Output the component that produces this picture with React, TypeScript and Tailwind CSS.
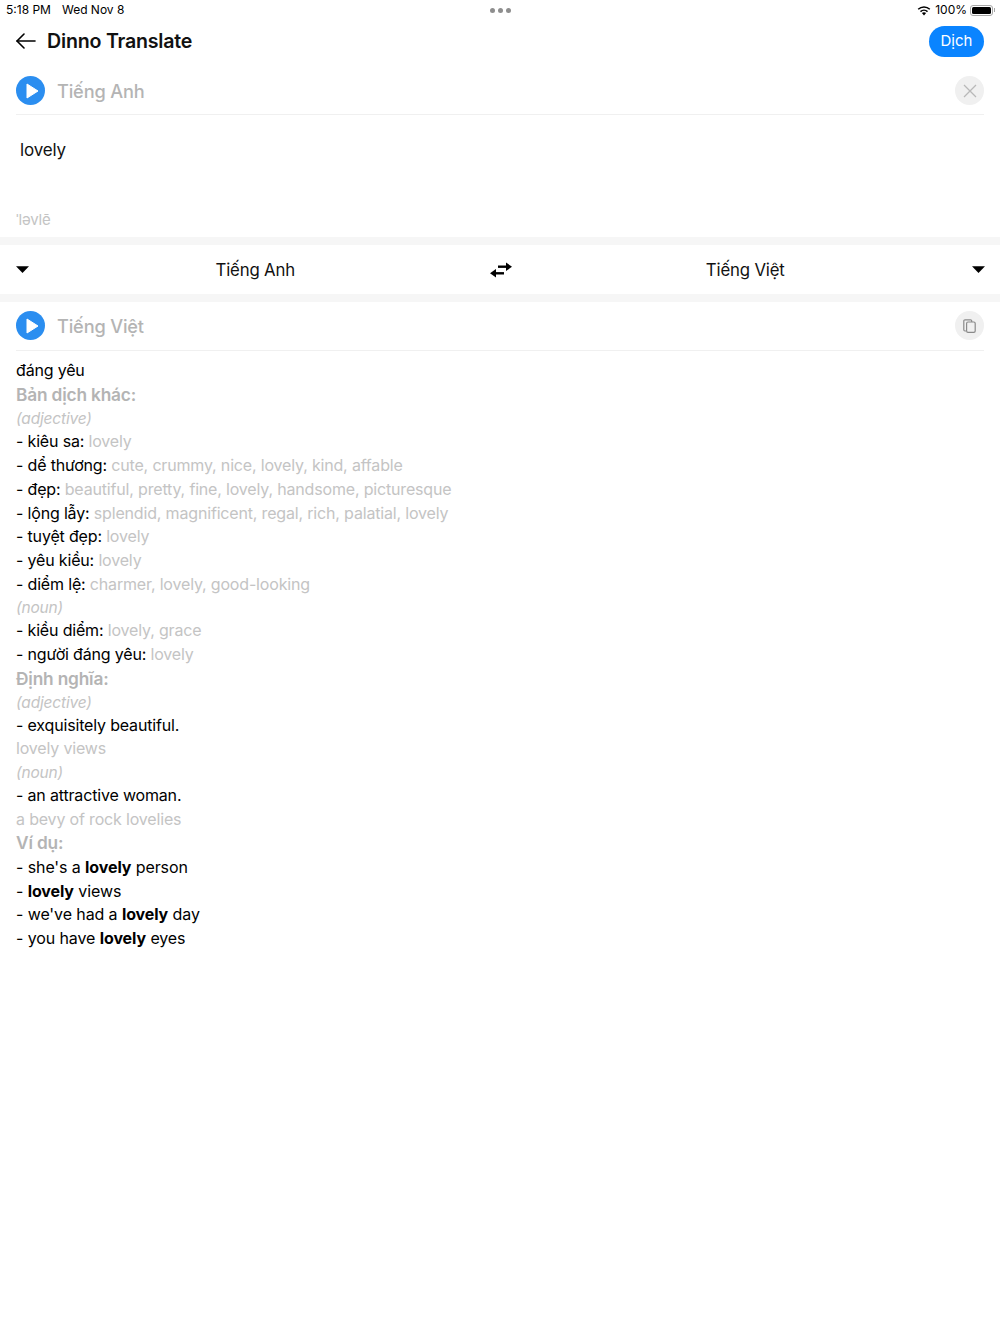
const font = { fontFamily: 'Inter, "Noto Sans", sans-serif' };

function PlayButton() {
  return (
    <div className="w-[29px] h-[29px] rounded-full bg-[#2b8ef0] flex items-center justify-center flex-shrink-0">
      <svg width="13" height="16" viewBox="0 0 13 16" className="ml-[3px]">
        <path d="M1 1 L12 8 L1 15 Z" fill="#fff" stroke="#fff" strokeWidth="1" strokeLinejoin="round" />
      </svg>
    </div>
  );
}

function Caret() {
  return (
    <svg width="13" height="7" viewBox="0 0 13 7">
      <path d="M0 0.3 H13 L6.5 7 Z" fill="#000" />
    </svg>
  );
}

function BackArrow() {
  return (
    <svg width="20" height="16" viewBox="0 0 20 16" fill="none" stroke="#000" strokeWidth="1.6" strokeLinecap="round" strokeLinejoin="round">
      <path d="M1 8 H19" />
      <path d="M8 1 L1 8 L8 15" />
    </svg>
  );
}

function CloseIcon() {
  return (
    <svg width="14" height="14" viewBox="0 0 14 14" fill="none" stroke="#b8b8b8" strokeWidth="1.3">
      <path d="M1 1 L13 13 M13 1 L1 13" />
    </svg>
  );
}

function CopyIcon() {
  return (
    <svg width="13" height="14" viewBox="0 0 13 14" fill="none" stroke="#8a8a8a" strokeWidth="1.2">
      <path d="M3 12 H2 A1.2 1.2 0 0 1 0.8 10.8 V2 A1.2 1.2 0 0 1 2 0.8 H7.5 A1.2 1.2 0 0 1 8.7 2 V3" />
      <rect x="3.6" y="3" width="8.6" height="10.4" rx="1.4" />
    </svg>
  );
}

function SwapIcon() {
  return (
    <svg width="22" height="16" viewBox="0 0 22 16">
      <path d="M8 4.7 H17" stroke="#000" strokeWidth="2.4" />
      <path d="M16 0.5 L22 4.7 L16 9 Z" fill="#000" />
      <path d="M14 11.3 H5" stroke="#000" strokeWidth="2.4" />
      <path d="M6 7 L0 11.3 L6 15.5 Z" fill="#000" />
    </svg>
  );
}

function WifiIcon() {
  return (
    <svg width="14" height="11" viewBox="0 0 14 11">
      <path d="M7 10.5 L4.9 8.1 A3.2 3.2 0 0 1 9.1 8.1 Z" fill="#000" />
      <path d="M3.5 6.6 A5.2 5.2 0 0 1 10.5 6.6" stroke="#000" strokeWidth="1.5" fill="none" />
      <path d="M1.2 4.2 A8.4 8.4 0 0 1 12.8 4.2" stroke="#000" strokeWidth="1.5" fill="none" />
    </svg>
  );
}

const translations = [
  { word: 'kiêu sa', rest: 'lovely' },
  { word: 'dể thương', rest: 'cute, crummy, nice, lovely, kind, affable' },
  { word: 'đẹp', rest: 'beautiful, pretty, fine, lovely, handsome, picturesque' },
  { word: 'lộng lẫy', rest: 'splendid, magnificent, regal, rich, palatial, lovely' },
  { word: 'tuyệt đẹp', rest: 'lovely' },
  { word: 'yêu kiều', rest: 'lovely' },
  { word: 'diểm lệ', rest: 'charmer, lovely, good-looking' },
];

const nouns = [
  { word: 'kiều diểm', rest: 'lovely, grace' },
  { word: 'người đáng yêu', rest: 'lovely' },
];

function Term({ word, rest }: { word: string; rest: string }) {
  return (
    <div className="h-[23.8px] leading-[23.8px] text-black">
      - {word}: <span className="text-[#c4c4c4]">{rest}</span>
    </div>
  );
}

function Heading({ children }: { children: string }) {
  return <div className="h-[24px] leading-[24px] font-semibold text-[17.3px] text-[#b4b4b4]">{children}</div>;
}

function Kind({ children, className }: { children: string; className?: string }) {
  return <div className={`h-[23.2px] leading-[24.8px] italic text-[15.5px] text-[#c4c4c4] ${className ?? ''}`}>{children}</div>;
}

function Example({ before, after }: { before: string; after: string }) {
  return (
    <div className="h-[23.7px] leading-[23.7px] text-black tracking-[-0.1px]">
      - {before}<span className="font-bold">lovely</span> {after}
    </div>
  );
}

export default function App() {
  return (
    <div className="w-[1000px] h-[1334px] bg-white overflow-hidden tracking-[-0.17px]" style={font}>
      <div className="h-[20px] pl-[6px] pr-[5px] grid grid-cols-[1fr_auto_1fr] items-center text-[12px] text-black tracking-normal">
        <div className="flex gap-[11px]">
          <span>5:18 PM</span>
          <span>Wed Nov 8</span>
        </div>
        <div className="flex gap-[3px]">
          <div className="w-[5px] h-[5px] rounded-full bg-[#8e8e8e]" />
          <div className="w-[5px] h-[5px] rounded-full bg-[#8e8e8e]" />
          <div className="w-[5px] h-[5px] rounded-full bg-[#8e8e8e]" />
        </div>
        <div className="flex items-center justify-end gap-[3px]">
          <WifiIcon />
          <span className="ml-[1px]">100%</span>
          <div className="w-[23px] h-[11px] rounded-[3px] border border-[#a8a8a8] p-[1px]">
            <div className="w-full h-full bg-black rounded-[1.5px]" />
          </div>
          <div className="w-[1px] h-[4px] -ml-[2px] bg-[#a8a8a8]" />
        </div>
      </div>

      <div className="h-[42px] pl-[16px] pr-[16px] flex items-center justify-between">
        <div className="flex items-center gap-[11px]">
          <BackArrow />
          <span className="text-[19.6px] font-semibold text-[#111] tracking-[-0.2px] pt-[2px]">Dinno Translate</span>
        </div>
        <div className="h-[31px] w-[55px] rounded-full bg-[#0a84ff] text-white text-[15px] flex items-center justify-center tracking-normal">Dịch</div>
      </div>

      <div className="mx-[16px] h-[53px] pt-[14px] border-b border-[#f0f0f0] flex items-start justify-between">
        <div className="flex items-center gap-[12px]">
          <PlayButton />
          <span className="text-[18.2px] font-medium text-[#b4b4b4] pt-[2px]">Tiếng Anh</span>
        </div>
        <div className="w-[29px] h-[29px] rounded-full bg-[#f0f0f0] flex items-center justify-center">
          <CloseIcon />
        </div>
      </div>

      <div className="h-[122px] px-[16px] flex flex-col justify-between">
        <div className="pl-[4px] pt-[23px] text-[17px] leading-[24px] text-[#111]">lovely</div>
        <div className="text-[15px] leading-[20px] pb-[7px] text-[#c4c4c4]">ˈləvlē</div>
      </div>

      <div className="h-[8px] bg-[#f6f6f6]" />

      <div className="h-[49px] pl-[16px] pr-[15px] grid grid-cols-[1fr_auto_1fr] items-center">
        <div className="flex items-center">
          <Caret />
          <span className="flex-1 text-center text-[16.8px] text-[#111] pl-[3px] pt-[2px]">Tiếng Anh</span>
        </div>
        <div className="w-[44px] flex justify-center">
          <SwapIcon />
        </div>
        <div className="flex items-center">
          <span className="flex-1 text-center text-[16.8px] text-[#111] pr-[4px] pt-[2px]">Tiếng Việt</span>
          <Caret />
        </div>
      </div>

      <div className="h-[8px] bg-[#f6f6f6]" />

      <div className="mx-[16px] h-[49px] pt-[9px] border-b border-[#f0f0f0] flex items-start justify-between">
        <div className="flex items-center gap-[12px]">
          <PlayButton />
          <span className="text-[18.2px] font-medium text-[#b4b4b4] pt-[2px]">Tiếng Việt</span>
        </div>
        <div className="w-[29px] h-[29px] rounded-full bg-[#f0f0f0] flex items-center justify-center">
          <CopyIcon />
        </div>
      </div>

      <div className="px-[16px] pt-[7px] text-[16px]">
        <div className="h-[25px] leading-[24px] text-black">đáng yêu</div>
        <Heading>Bản dịch khác:</Heading>
        <Kind>(adjective)</Kind>
        {translations.map((t, i) => <Term key={i} word={t.word} rest={t.rest} />)}
        <Kind className="-mt-[0.6px] -mb-[0.2px]">(noun)</Kind>
        {nouns.map((t, i) => <Term key={i} word={t.word} rest={t.rest} />)}
        <Heading>Định nghĩa:</Heading>
        <Kind className="-mb-[0.4px]">(adjective)</Kind>
        <div className="h-[23.6px] leading-[23.6px] text-black">- exquisitely beautiful.</div>
        <div className="h-[23.6px] leading-[23.6px] text-[#c4c4c4]">lovely views</div>
        <Kind>(noun)</Kind>
        <div className="h-[23.4px] leading-[23.4px] text-black">- an attractive woman.</div>
        <div className="h-[24px] leading-[24px] text-[#c4c4c4]">a bevy of rock lovelies</div>
        <Heading>Ví dụ:</Heading>
        <div className="pt-[0.6px]">
          <Example before="she's a " after="person" />
          <Example before="" after="views" />
          <Example before="we've had a " after="day" />
          <Example before="you have " after="eyes" />
        </div>
      </div>
    </div>
  );
}
